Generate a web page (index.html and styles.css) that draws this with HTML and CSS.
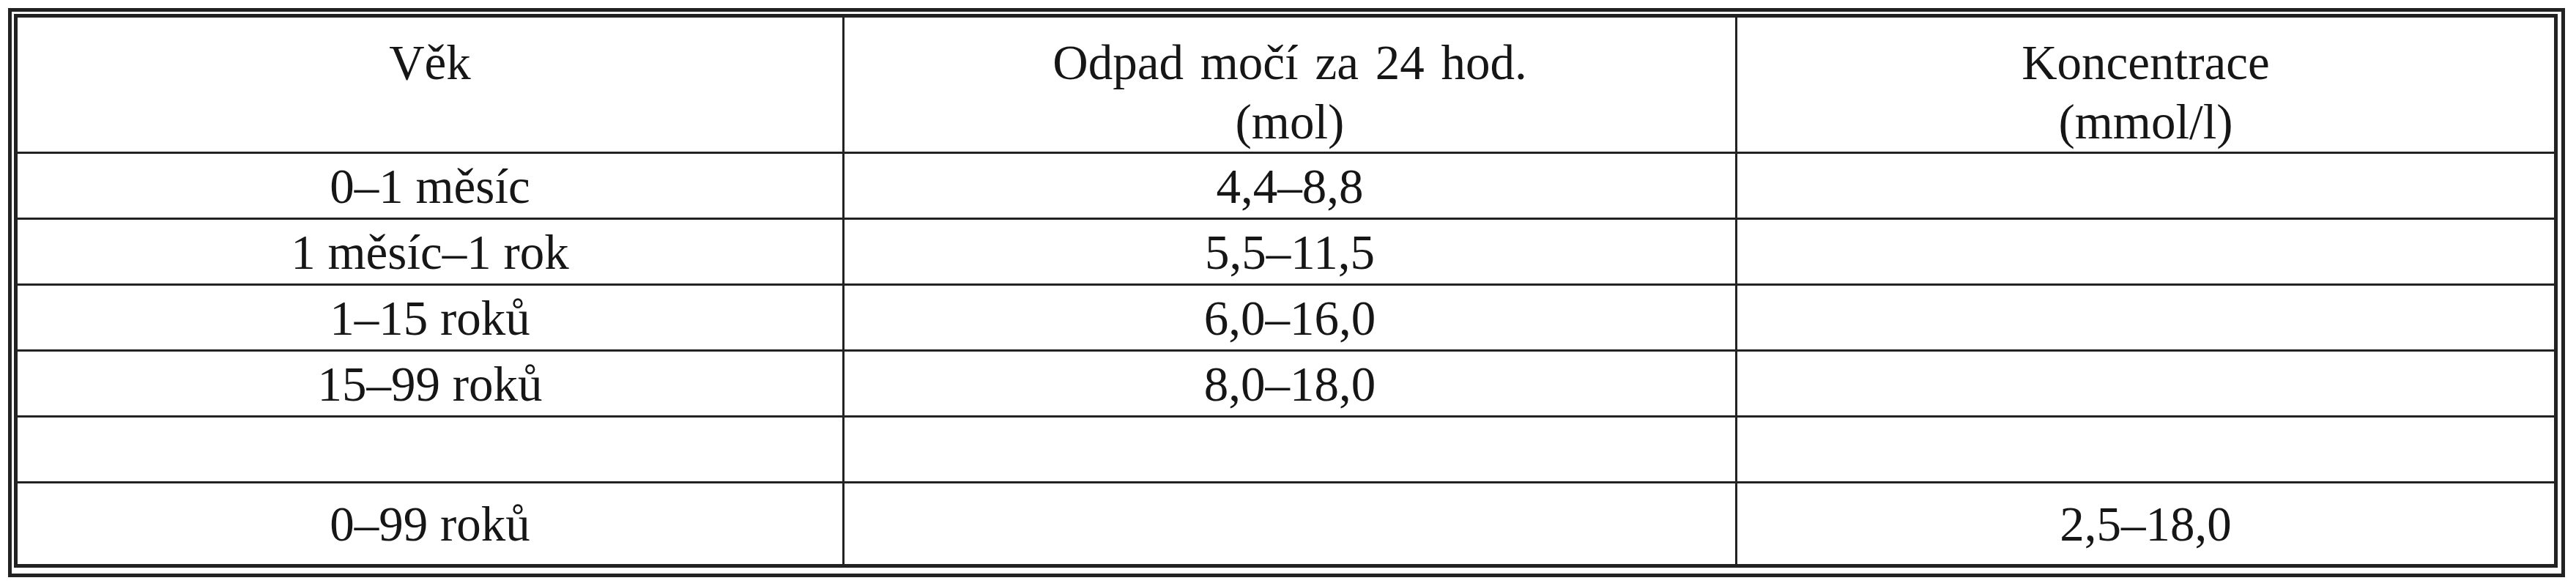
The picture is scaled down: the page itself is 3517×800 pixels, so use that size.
FILE: index.html
```html
<!DOCTYPE html>
<html lang="cs">
<head>
<meta charset="utf-8">
<title>Odpad močí</title>
<link rel="stylesheet" href="styles.css">
</head>
<body>
<div class="frame">
  <table class="data">
    <colgroup>
      <col class="c1">
      <col class="c2">
      <col class="c3">
    </colgroup>
    <thead>
      <tr class="head">
        <th>Věk</th>
        <th>Odpad močí za 24 hod.<br>(mol)</th>
        <th>Koncentrace<br>(mmol/l)</th>
      </tr>
    </thead>
    <tbody>
      <tr class="row"><td>0–1 měsíc</td><td>4,4–8,8</td><td></td></tr>
      <tr class="row"><td>1 měsíc–1 rok</td><td>5,5–11,5</td><td></td></tr>
      <tr class="row"><td>1–15 roků</td><td>6,0–16,0</td><td></td></tr>
      <tr class="row"><td>15–99 roků</td><td>8,0–18,0</td><td></td></tr>
      <tr class="row"><td></td><td></td><td></td></tr>
      <tr class="row last"><td>0–99 roků</td><td></td><td>2,5–18,0</td></tr>
    </tbody>
  </table>
</div>
</body>
</html>
```

FILE: styles.css
```css
html, body {
  margin: 0;
  padding: 0;
  background: #ffffff;
}

body {
  font-family: "Liberation Serif", "Times New Roman", serif;
  color: #161616;
}

.frame {
  margin: 11px 0 0 11px;
  width: 3491px;
  height: 777px;
  border: 5px solid #222222;
  padding: 3px;
  box-sizing: border-box;
}

.data {
  width: 3473px;
  border: 5px solid #222222;
  border-spacing: 0;
  border-collapse: separate;
  table-layout: fixed;
}

.c1 { width: 1129px; }
.c2 { width: 1219px; }
.c3 { width: 1115px; }

.data th,
.data td {
  padding: 0;
  text-align: center;
  font-size: 67px;
  font-weight: normal;
  line-height: 78px;
  border-right: 3px solid #222222;
  border-bottom: 3px solid #222222;
}

.data th:last-child,
.data td:last-child {
  border-right: 0;
}

.head th {
  height: 185px;
  vertical-align: top;
  padding-top: 21px;
  line-height: 81px;
  word-spacing: 6px;
  box-sizing: border-box;
}

.row td {
  height: 90px;
  box-sizing: border-box;
  vertical-align: middle;
}

.row.last td {
  height: 110px;
  border-bottom: 0;
}
```
